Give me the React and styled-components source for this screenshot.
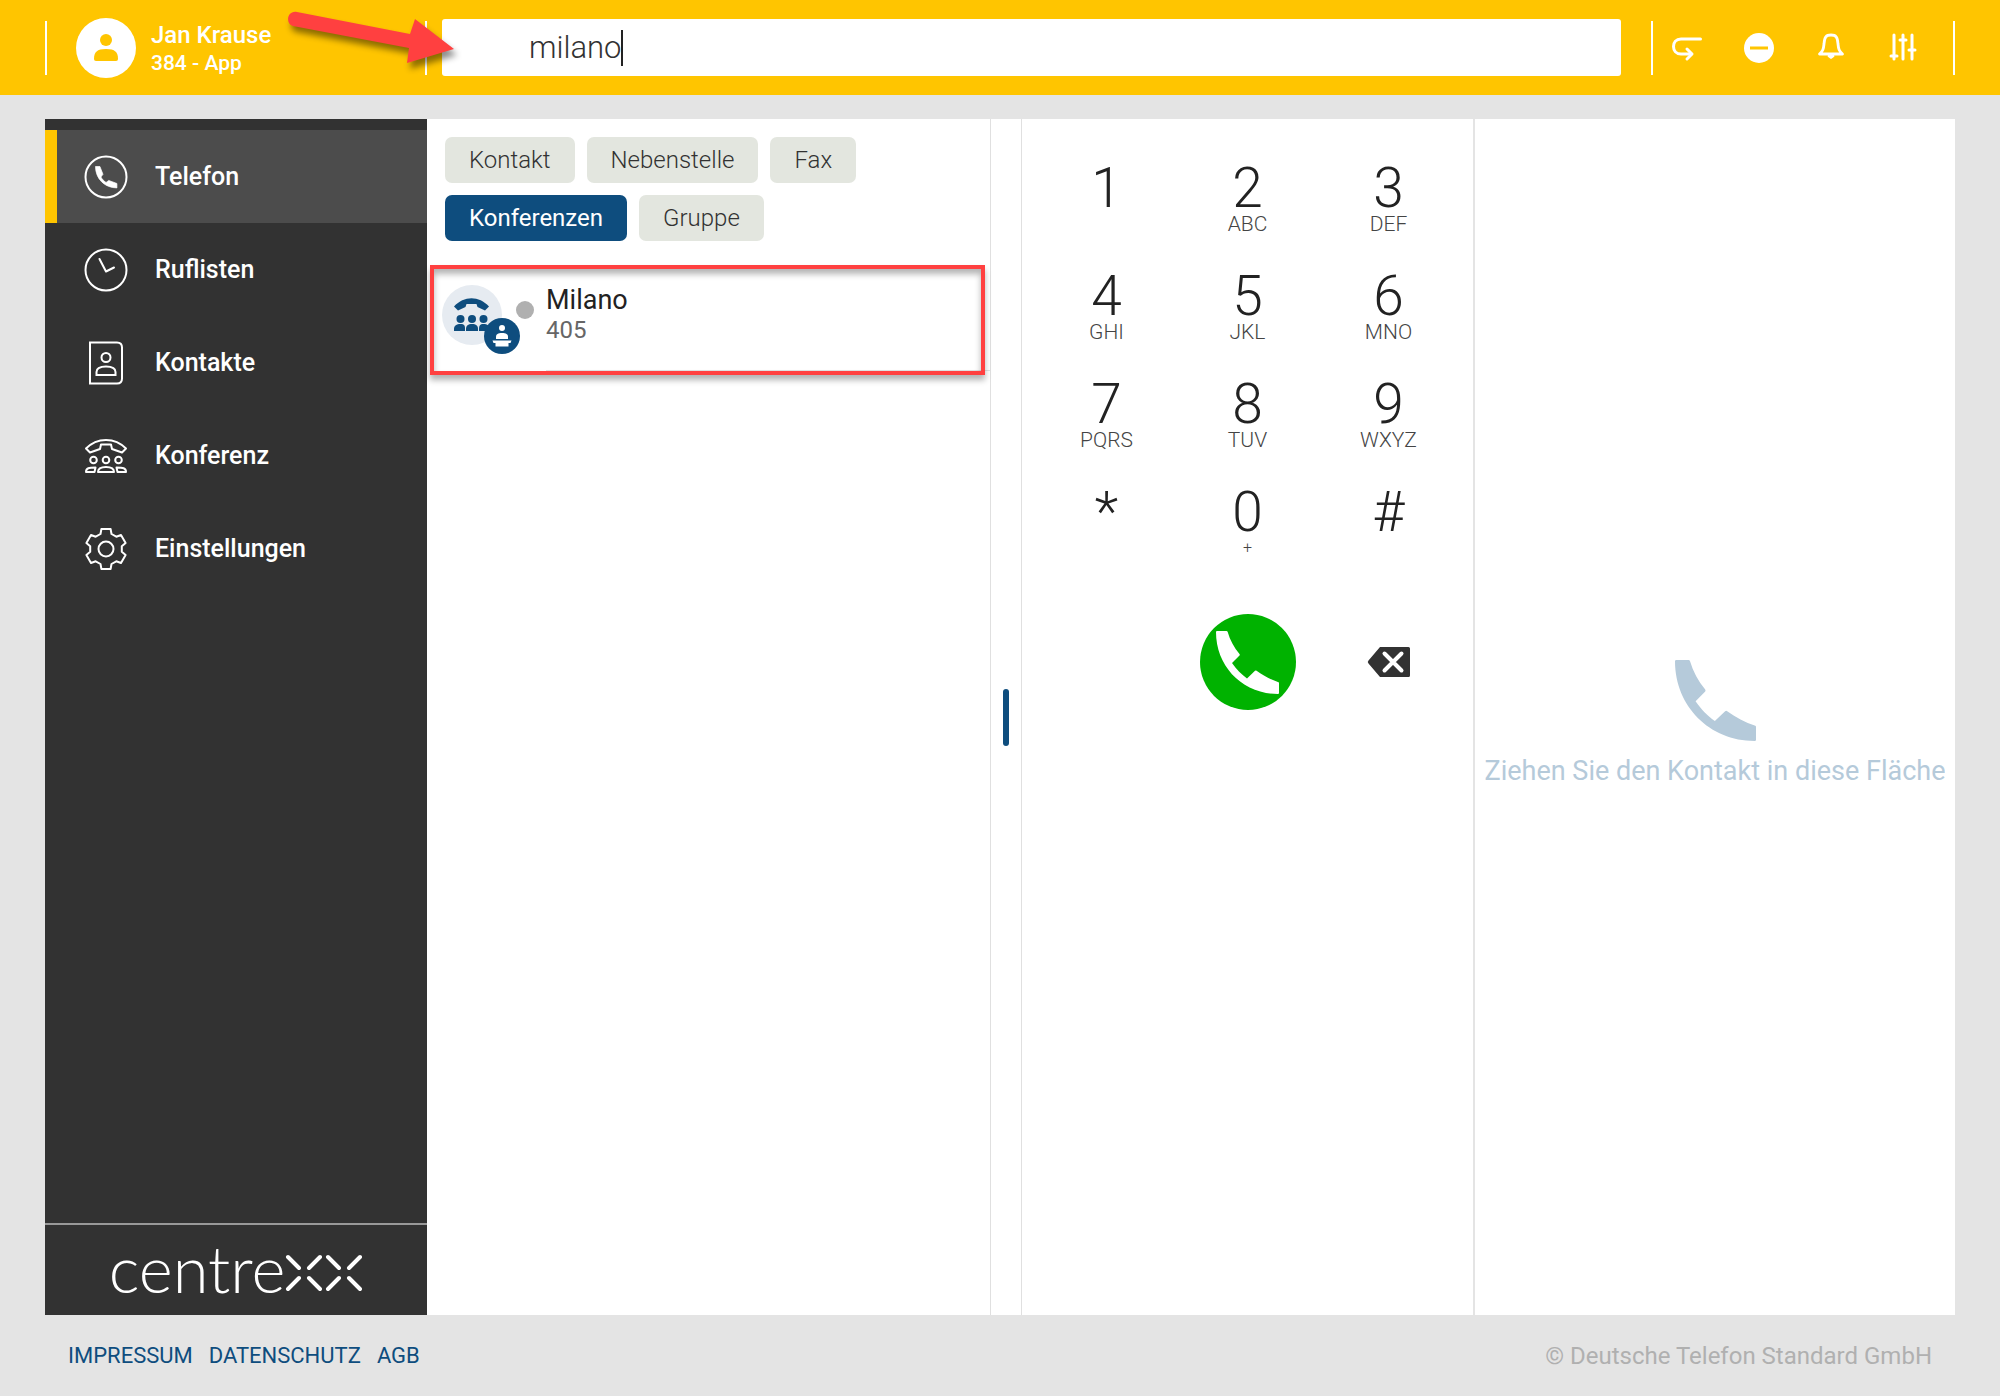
import React, { useState } from "react";
import styled, { createGlobalStyle } from "styled-components";

const PhoneShape = ({ size }) => (
  <svg width={size} height={size} viewBox="0 0 63 63" fill="currentColor" aria-hidden="true">
    <path d="M1 0H10.500Q11.400 0 11.700 1C14 9 18 16.500 23.500 23Q24 23.700 23.500 24.500L16 32C20.500 38.500 25 43 31 47.500L39 39.800Q39.800 39.200 40.600 39.800C47 44.500 54.500 48.500 62.500 51.200Q63 51.500 63 52V62Q63 63 62 63C27 63 0 36 0 1Q0 0 1 0Z" />
  </svg>
);

const PhoneIcon = () => (
  <svg width="44" height="44" viewBox="0 0 44 44" fill="none" aria-hidden="true">
    <circle cx="22" cy="22" r="20.500" stroke="currentColor" strokeWidth="2" />
    <g transform="translate(11.500 11.500) scale(0.34)" fill="currentColor" stroke="currentColor" strokeWidth="2">
      <path d="M0 0H13L22 23L16 31C20 38 25 43 31 47L39 41L63 50V63C27 63 0 36 0 0Z" />
    </g>
  </svg>
);

const ClockIcon = () => (
  <svg width="44" height="44" viewBox="0 0 44 44" fill="none" stroke="currentColor" strokeWidth="2" strokeLinecap="round" strokeLinejoin="round" aria-hidden="true">
    <circle cx="22" cy="22" r="20.500" />
    <path d="M15.500 11L22 23.500L30 19.500" />
  </svg>
);

const ContactIcon = () => (
  <svg width="44" height="44" viewBox="0 0 44 44" fill="none" stroke="currentColor" strokeWidth="2" aria-hidden="true">
    <path d="M6 1.500H33Q38 1.500 38 6.500V37.500Q38 42.500 33 42.500H6Z" />
    <circle cx="22" cy="16.500" r="4.500" />
    <path d="M12.500 34V31C12.500 27 16 25.500 22 25.500S31.500 27 31.500 31V34Z" />
  </svg>
);

const ConferenceIcon = () => (
  <svg width="44" height="44" viewBox="0 0 44 44" fill="none" stroke="currentColor" strokeWidth="2" strokeLinejoin="round" aria-hidden="true">
    <path d="M2 14.500C13 3 31 3 42 14.500L38 18.500L28 15L27 10.500H17L16 15L6 18.500Z" />
    <circle cx="9.500" cy="26" r="3.300" />
    <circle cx="22" cy="26" r="3.300" />
    <circle cx="34.500" cy="26" r="3.300" />
    <path d="M2 38C2 34 5 33.500 11.500 33.500L10.500 38Z" />
    <path d="M14 38C14 34.500 17 33 22 33S30 34.500 30 38Z" />
    <path d="M42 38C42 34 39 33.500 32.500 33.500L33.500 38Z" />
  </svg>
);

const gearPoints = [0, 60, 120, 180, 240, 300]
  .flatMap((deg) => [
    [deg - 20, 16],
    [deg - 13, 20.5],
    [deg + 13, 20.5],
    [deg + 20, 16],
  ])
  .map(([deg, r]) => {
    const a = ((deg - 90) * Math.PI) / 180;
    return `${(22 + r * Math.cos(a)).toFixed(1)},${(22 + r * Math.sin(a)).toFixed(1)}`;
  })
  .join(" ");

const GearIcon = () => (
  <svg width="44" height="44" viewBox="0 0 44 44" fill="none" stroke="currentColor" strokeWidth="2" strokeLinejoin="round" aria-hidden="true">
    <polygon points={gearPoints} />
    <circle cx="22" cy="22" r="7.500" />
  </svg>
);

const UserIcon = () => (
  <svg width="60" height="60" viewBox="0 0 60 60" fill="#ffc500" aria-hidden="true">
    <circle cx="30" cy="22" r="6" />
    <path d="M18 41C18 34 21 31 30 31S42 34 42 41Q42 43 40 43H20Q18 43 18 41Z" />
  </svg>
);

const ForwardIcon = () => (
  <svg width="32" height="32" viewBox="0 0 32 32" fill="none" stroke="currentColor" strokeWidth="3" strokeLinecap="round" strokeLinejoin="round" aria-hidden="true">
    <path d="M29.500 7H10C5 7 2.500 10.500 2.500 14.500S5 22 10 22H20" />
    <path d="M16 17L21 22L16 27" />
  </svg>
);

const MinusCircleIcon = () => (
  <svg width="32" height="32" viewBox="0 0 32 32" aria-hidden="true">
    <circle cx="16" cy="16" r="15" fill="currentColor" />
    <rect x="7" y="14.500" width="18" height="3" fill="#ffc500" />
  </svg>
);

const BellIcon = () => (
  <svg width="32" height="32" viewBox="0 0 32 32" fill="none" stroke="currentColor" strokeWidth="2.800" strokeLinecap="round" strokeLinejoin="round" aria-hidden="true">
    <path d="M4.500 22C8 19 8.500 17 9 12C9.500 5 11 3 16 3S22.500 5 23 12C23.500 17 24 19 27.500 22Z" />
    <path d="M14 24H18L16 25.500Z" fill="currentColor" />
  </svg>
);

const SlidersIcon = () => (
  <svg width="32" height="32" viewBox="0 0 32 32" fill="none" stroke="currentColor" strokeWidth="3" strokeLinecap="round" aria-hidden="true">
    <path d="M7 3V27M16 3V27M25 3V27M4 24H10M13 8H19M22 18H28" />
  </svg>
);

const BackspaceIcon = () => (
  <svg width="44" height="32" viewBox="0 0 44 32" aria-hidden="true">
    <path d="M13 1H41.500Q43 1 43 2.500V29.500Q43 31 41.500 31H13L1.500 17.500Q0 16 1.500 14.500Z" fill="#323232" />
    <path d="M17.500 7.500L34.500 24.500M34.500 7.500L17.500 24.500" stroke="#fff" strokeWidth="4" strokeLinecap="round" />
  </svg>
);

const GroupCallIcon = () => (
  <svg width="36" height="34" viewBox="0 0 36 34" fill="#0e4d7e" aria-hidden="true">
    <path d="M0 8.500C10-2.500 25-2.500 35 8.500L31 12.500L23.500 9L22.500 6H12.500L11.500 9L4 12.500Z" />
    <circle cx="6.500" cy="21" r="4" />
    <circle cx="18" cy="21" r="4" />
    <circle cx="29.500" cy="21" r="4" />
    <path d="M0 33V31C0 27.500 2.500 26 6.500 26S11 27.500 11 31V33Z" />
    <path d="M12 33V31C12 27.500 14 26 18 26S24 27.500 24 31V33Z" />
    <path d="M25 33V31C25 27.500 26 26 29.500 26S36 27.500 36 31V33Z" />
  </svg>
);

const PodiumIcon = () => (
  <svg width="36" height="36" viewBox="0 0 36 36" fill="#fff" aria-hidden="true">
    <circle cx="18" cy="10" r="3" />
    <path d="M12 21V19C12 16 14 15 18 15S24 16 24 19V21Z" />
    <path d="M8.500 22.500H27.500L26.500 25H24.500V28.500H11.500V25H9.500Z" />
  </svg>
);

const CrossMark = () => (
  <svg width="78" height="38" viewBox="0 0 78 38" fill="none" stroke="currentColor" strokeWidth="4" strokeLinecap="round" aria-hidden="true">
    <path d="M3 3L14 14M35 3L24 14M3 35L14 24M35 35L24 24" />
    <path d="M43 3L54 14M75 3L64 14M43 35L54 24M75 35L64 24" />
  </svg>
);

const navItems = [
  { label: "Telefon", Icon: PhoneIcon },
  { label: "Ruflisten", Icon: ClockIcon },
  { label: "Kontakte", Icon: ContactIcon },
  { label: "Konferenz", Icon: ConferenceIcon },
  { label: "Einstellungen", Icon: GearIcon },
];

const filters = ["Kontakt", "Nebenstelle", "Fax", "Konferenzen", "Gruppe"];

const keys = [
  ["1", ""],
  ["2", "ABC"],
  ["3", "DEF"],
  ["4", "GHI"],
  ["5", "JKL"],
  ["6", "MNO"],
  ["7", "PQRS"],
  ["8", "TUV"],
  ["9", "WXYZ"],
  ["*", ""],
  ["0", "+"],
  ["#", ""],
];

const App = () => {
  const [query, setQuery] = useState("milano");
  const [filter, setFilter] = useState("Konferenzen");
  const [page, setPage] = useState("Telefon");

  return (
    <Page>
      <GlobalStyle />
      <Header>
        <Profile>
          <Avatar>
            <UserIcon />
          </Avatar>
          <div>
            <UserName>Jan Krause</UserName>
            <UserLine>384 - App</UserLine>
          </div>
        </Profile>
        <SearchBox>
          <SearchInput aria-label="Suche" value={query} onChange={(e) => setQuery(e.target.value)} />
          <Caret />
        </SearchBox>
        <Actions>
          <IconButton aria-label="Rufumleitung"><ForwardIcon /></IconButton>
          <IconButton aria-label="Nicht stören"><MinusCircleIcon /></IconButton>
          <IconButton aria-label="Benachrichtigungen"><BellIcon /></IconButton>
          <IconButton aria-label="Optionen"><SlidersIcon /></IconButton>
        </Actions>
        <Arrow width="190" height="90" viewBox="0 0 190 90" aria-hidden="true">
          <path d="M17 12L130 34L135 19L174 49L127 63L129 48L13 26C5 24 7 10 17 12Z" fill="#ff4040" />
        </Arrow>
      </Header>

      <Main>
        <Sidebar>
          <Nav>
            {navItems.map(({ label, Icon }) => (
              <NavLink key={label} href="#" $active={page === label} onClick={() => setPage(label)}>
                <Icon />
                {label}
              </NavLink>
            ))}
          </Nav>
          <Logo>
            centre
            <CrossMark />
          </Logo>
        </Sidebar>

        <Results>
          <Filters>
            {filters.map((name) => (
              <Chip key={name} $active={filter === name} onClick={() => setFilter(name)}>
                {name}
              </Chip>
            ))}
          </Filters>
          <Contact>
            <ContactAvatar>
              <GroupCallIcon />
              <Badge>
                <PodiumIcon />
              </Badge>
            </ContactAvatar>
            <Status />
            <ContactText>
              <ContactName>Milano</ContactName>
              <ContactNumber>405</ContactNumber>
            </ContactText>
            <Frame />
          </Contact>
        </Results>

        <Resizer>
          <Handle />
        </Resizer>

        <Dialer>
          <Keypad>
            {keys.map(([digit, letters]) => (
              <Key key={digit}>
                <Digit>{digit}</Digit>
                {letters && <Letters $small={letters === "+"}>{letters}</Letters>}
              </Key>
            ))}
          </Keypad>
          <CallRow>
            <CallButton aria-label="Anrufen">
              <PhoneShape size={63} />
            </CallButton>
            <EraseButton aria-label="Löschen">
              <BackspaceIcon />
            </EraseButton>
          </CallRow>
        </Dialer>

        <DropArea>
          <PhoneShape size={81} />
          <DropText>Ziehen Sie den Kontakt in diese Fläche</DropText>
        </DropArea>
      </Main>

      <Footer>
        <FooterLinks>
          <a href="#">IMPRESSUM</a>
          <a href="#">DATENSCHUTZ</a>
          <a href="#">AGB</a>
        </FooterLinks>
        <span>© Deutsche Telefon Standard GmbH</span>
      </Footer>
    </Page>
  );
};

export default App;

const GlobalStyle = createGlobalStyle`
  * {
    box-sizing: border-box;
  }
  body {
    margin: 0;
    background: #e4e4e4;
    font-family: Roboto, "Liberation Sans", sans-serif;
    color: #222;
  }
  button {
    border: 0;
    padding: 0;
    background: none;
    font: inherit;
    color: inherit;
    cursor: pointer;
  }
  a {
    color: inherit;
    text-decoration: none;
  }
  svg {
    display: block;
    flex-shrink: 0;
  }
`;

const Page = styled.div`
  display: flex;
  flex-direction: column;
  min-height: 100vh;
`;

const Header = styled.header`
  position: relative;
  display: flex;
  align-items: center;
  height: 95px;
  padding: 0 45px;
  background: #ffc500;
  color: #fff;
`;

const Profile = styled.div`
  display: flex;
  align-items: center;
  gap: 15px;
  width: 382px;
  height: 54px;
  padding-left: 29px;
  border-left: 2px solid #fff;
  border-right: 2px solid #fff;
`;

const Avatar = styled.div`
  border-radius: 50%;
  background: #fff;
`;

const UserName = styled.div`
  padding-top: 2px;
  font-size: 24px;
  line-height: 28px;
  font-weight: 500;
`;

const UserLine = styled.div`
  font-size: 21px;
  line-height: 28px;
  font-weight: 500;
`;

const SearchBox = styled.div`
  flex: 1;
  display: flex;
  align-items: center;
  height: 57px;
  margin: 0 30px 0 15px;
  padding-left: 87px;
  border-radius: 3px;
  background: #fff;
`;

const SearchInput = styled.input`
  field-sizing: content;
  min-width: 4px;
  padding: 0;
  border: 0;
  outline: 0;
  background: none;
  font: 300 31px/40px Roboto, "Liberation Sans", sans-serif;
  color: #323232;
  caret-color: transparent;
`;

const Caret = styled.span`
  width: 2px;
  height: 36px;
  background: #222;
`;

const Actions = styled.div`
  display: flex;
  align-items: center;
  gap: 40px;
  width: 304px;
  height: 54px;
  padding-left: 18px;
  border-left: 2px solid #fff;
  border-right: 2px solid #fff;
`;

const IconButton = styled.button`
  display: flex;
`;

const Arrow = styled.svg`
  position: absolute;
  top: 0;
  left: 280px;
  filter: drop-shadow(3px 6px 3px rgba(0, 0, 0, 0.45));
  pointer-events: none;
`;

const Main = styled.main`
  flex: 1;
  display: flex;
  margin: 24px 45px 0;
  background: #fff;
`;

const Sidebar = styled.aside`
  display: flex;
  flex-direction: column;
  width: 382px;
  padding-top: 11px;
  background: #323232;
  color: #fff;
`;

const Nav = styled.nav`
  flex: 1;
`;

const NavLink = styled.a`
  display: flex;
  align-items: center;
  gap: 27px;
  height: 93px;
  padding-left: 27px;
  border-left: 12px solid ${({ $active }) => ($active ? "#ffc500" : "transparent")};
  background: ${({ $active }) => ($active ? "#4c4c4c" : "none")};
  background-clip: padding-box;
  font-size: 25px;
  font-weight: 500;
`;

const Logo = styled.div`
  display: flex;
  align-items: center;
  justify-content: center;
  height: 92px;
  padding-bottom: 4px;
  border-top: 2px solid #999;
  font: 300 65px/80px Lato, sans-serif;

  svg {
    margin-top: 10px;
  }
`;

const Results = styled.section`
  flex: 1;
  min-width: 0;
  border-right: 1px solid #e0e0e0;
`;

const Filters = styled.div`
  display: flex;
  flex-wrap: wrap;
  gap: 12px;
  padding: 18px 100px 24px 18px;
`;

const Chip = styled.button`
  height: 46px;
  padding: 0 24px;
  border-radius: 7px;
  background: ${({ $active }) => ($active ? "#0e4d7e" : "#e3e6df")};
  color: ${({ $active }) => ($active ? "#fff" : "#323232")};
  font-size: 24px;
  font-weight: ${({ $active }) => ($active ? 400 : 300)};
`;

const Contact = styled.div`
  position: relative;
  display: flex;
  align-items: flex-start;
  height: 106px;
  padding: 20px 0 0 15px;
`;

/* highlight drawn over the found entry */
const Frame = styled.div`
  position: absolute;
  inset: 0 5px -4px 3px;
  border: 4px solid #ff4040;
  box-shadow: 0 5px 6px rgba(0, 0, 0, 0.3), inset 0 5px 6px rgba(0, 0, 0, 0.3);
  pointer-events: none;
`;

const ContactAvatar = styled.div`
  position: relative;
  display: flex;
  align-items: center;
  justify-content: center;
  width: 60px;
  height: 60px;
  border-radius: 50%;
  background: #e6ebf1;
`;

const Badge = styled.div`
  position: absolute;
  right: -18px;
  bottom: -9px;
  border-radius: 50%;
  background: #0e4d7e;
`;

const Status = styled.span`
  width: 18px;
  height: 18px;
  margin: 16px 12px 0 14px;
  border-radius: 50%;
  background: #b0b0b0;
`;

const ContactText = styled.div`
  flex: 1;
  align-self: stretch;
  border-bottom: 1px solid #e0e4e4;
`;

const ContactName = styled.div`
  font-size: 27px;
  line-height: 30px;
`;

const ContactNumber = styled.div`
  font-size: 24px;
  line-height: 30px;
  color: #666;
`;

const Resizer = styled.div`
  display: flex;
  align-items: center;
  justify-content: center;
  width: 31px;
  border-right: 1px solid #e0e0e0;
`;

const Handle = styled.div`
  width: 6px;
  height: 57px;
  border-radius: 3px;
  background: #0e4d7e;
`;

const Dialer = styled.section`
  width: 453px;
  padding: 37px 14px;
  border-right: 2px solid #e4e4e4;
`;

const Keypad = styled.div`
  display: grid;
  grid-template-columns: repeat(3, 1fr);
`;

const Key = styled.button`
  display: flex;
  flex-direction: column;
  align-items: center;
  height: 108px;
  padding-top: 8px;
`;

const Digit = styled.span`
  font-size: 55px;
  line-height: 48px;
  font-weight: 300;
`;

const Letters = styled.span`
  font-size: ${({ $small }) => ($small ? "16px" : "21px")};
  line-height: 24px;
  font-weight: 300;
  color: #444;
`;

const CallRow = styled.div`
  display: grid;
  grid-template-columns: repeat(3, 1fr);
  align-items: center;
  justify-items: center;
  margin-top: 26px;
`;

const CallButton = styled.button`
  grid-column: 2;
  display: flex;
  align-items: center;
  justify-content: center;
  width: 96px;
  height: 96px;
  border-radius: 50%;
  background: #00b200;
  color: #fff;
`;

const EraseButton = styled.button`
  display: flex;
`;

const DropArea = styled.section`
  display: flex;
  flex-direction: column;
  align-items: center;
  justify-content: center;
  gap: 12px;
  width: 480px;
  padding: 14px 6px 0;
  color: #b5cada;
`;

const DropText = styled.p`
  max-width: 100%;
  margin: 0;
  overflow: hidden;
  white-space: nowrap;
  font-size: 27px;
  line-height: 36px;
`;

const Footer = styled.footer`
  display: flex;
  align-items: center;
  justify-content: space-between;
  height: 81px;
  padding: 0 68px;
  font-size: 24px;
  color: #b0b0b0;
`;

const FooterLinks = styled.div`
  display: flex;
  gap: 16px;
  font-size: 22px;
  color: #0e4d7e;
`;
